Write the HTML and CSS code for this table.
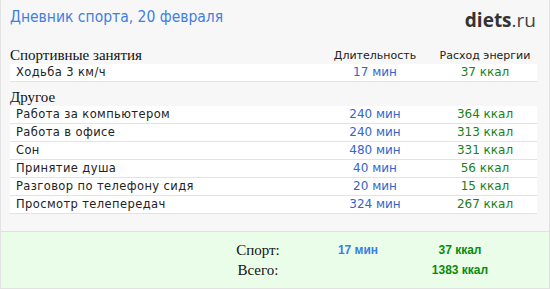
FILE: index.html
```html
<!DOCTYPE html>
<html lang="ru">
<head>
<meta charset="utf-8">
<title>Дневник спорта</title>
<link rel="stylesheet" href="styles.css">
</head>
<body>
<div class="box">
  <div class="top">
    <h1 class="title">Дневник спорта, 20 февраля</h1>
    <div class="logo"><span class="logo-main">diets</span><span class="logo-tld">.ru</span></div>
  </div>
  <div class="content">
    <div class="grid head">
      <span class="section">Спортивные занятия</span>
      <span class="colhead">Длительность</span>
      <span class="colhead">Расход энергии</span>
    </div>
    <div class="grid row"><span class="name">Ходьба 3 км/ч</span><span class="dur">17 мин</span><span class="kcal">37 ккал</span></div>
    <div class="grid head second">
      <span class="section">Другое</span>
    </div>
    <div class="grid row"><span class="name">Работа за компьютером</span><span class="dur">240 мин</span><span class="kcal">364 ккал</span></div>
    <div class="grid row"><span class="name">Работа в офисе</span><span class="dur">240 мин</span><span class="kcal">313 ккал</span></div>
    <div class="grid row"><span class="name">Сон</span><span class="dur">480 мин</span><span class="kcal">331 ккал</span></div>
    <div class="grid row"><span class="name">Принятие душа</span><span class="dur">40 мин</span><span class="kcal">56 ккал</span></div>
    <div class="grid row"><span class="name">Разговор по телефону сидя</span><span class="dur">20 мин</span><span class="kcal">15 ккал</span></div>
    <div class="grid row"><span class="name">Просмотр телепередач</span><span class="dur">324 мин</span><span class="kcal">267 ккал</span></div>
  </div>
  <div class="summary">
    <div class="sum-grid">
      <span class="sum-label">Спорт:</span><span class="sum-dur">17 мин</span><span class="sum-kcal">37 ккал</span>
      <span class="sum-label">Всего:</span><span class="sum-dur"></span><span class="sum-kcal">1383 ккал</span>
    </div>
  </div>
</div>
</body>
</html>
```
FILE: styles.css
```css
html, body {
  margin: 0;
  padding: 0;
  background: #ffffff;
}

.box {
  width: 548px;
  height: 288px;
  background: #f7f7f7;
  border: 1px solid #e2e2e2;
  border-top: none;
  display: flex;
  flex-direction: column;
  font-family: "DejaVu Sans", Verdana, sans-serif;
}

.top {
  height: 47px;
  box-sizing: border-box;
  padding: 7px 12px 0 9px;
  display: flex;
  justify-content: space-between;
  align-items: flex-start;
}

.title {
  margin: 0;
  font-family: "DejaVu Sans Condensed", "DejaVu Sans", sans-serif;
  font-stretch: condensed;
  font-weight: normal;
  font-size: 15.5px;
  line-height: 20px;
  color: #3f7fe0;
}

.logo {
  font-family: "Open Sans", sans-serif;
  font-size: 19px;
  line-height: 24px;
  color: #333333;
  margin-top: 1px;
  padding-right: 1px;
}

.logo-main {
  font-weight: 700;
}

.logo-tld {
  font-weight: 400;
  color: #444444;
}

.content {
  padding: 0 12px 0 9px;
}

.grid {
  display: grid;
  grid-template-columns: 1fr 110px 107px;
  align-items: center;
}

.head {
  line-height: 17px;
  height: 17px;
}

.head.second {
  margin-top: 7px;
}

.section {
  font-family: "Liberation Serif", "DejaVu Serif", serif;
  font-size: 15px;
  color: #111111;
}

.colhead {
  font-size: 11px;
  color: #222222;
  text-align: center;
}

.colhead:last-child {
  padding-left: 3px;
}

.row {
  background: #ffffff;
  height: 17px;
  line-height: 17px;
  border-bottom: 1px solid #e3e3e3;
  font-size: 12px;
}

.name {
  padding-left: 6px;
  font-size: 11.5px;
  letter-spacing: 0.4px;
  color: #222222;
}

.dur {
  text-align: center;
  color: #3366cc;
}

.kcal {
  text-align: center;
  padding-left: 3px;
  color: #1a7f1a;
}

.summary {
  margin-top: auto;
  height: 57px;
  box-sizing: border-box;
  background: #eafde9;
  border-top: 1px solid #d7e6d7;
  padding: 8px 37px 0 0;
  display: flex;
  justify-content: flex-end;
}

.sum-grid {
  display: grid;
  grid-template-columns: 100px 100px 104px;
  grid-auto-rows: 20px;
  line-height: 20px;
  text-align: center;
}

.sum-label {
  font-family: "Liberation Serif", "DejaVu Serif", serif;
  font-size: 15px;
  color: #111111;
}

.sum-dur {
  font-family: "Liberation Sans", Arial, sans-serif;
  font-weight: bold;
  font-size: 12px;
  color: #3a7ee6;
}

.sum-kcal {
  font-family: "Liberation Sans", Arial, sans-serif;
  font-weight: bold;
  font-size: 12px;
  color: #0a8a0a;
}
```
